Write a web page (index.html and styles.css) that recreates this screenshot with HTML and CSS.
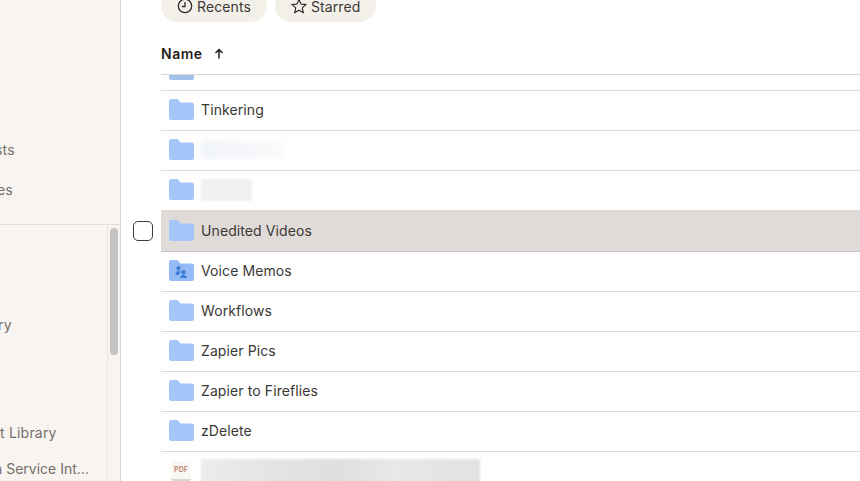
FILE: index.html
```html
<!DOCTYPE html>
<html lang="en">
<head>
  <meta charset="UTF-8" />
  <meta name="viewport" content="width=device-width, initial-scale=1.0"/>
  <title>All files</title>
  <link rel="stylesheet" href="styles.css">
</head>
<body>

  <svg class="defs" aria-hidden="true">
    <symbol id="folder" viewBox="0 0 25 21">
      <path d="M0 2a2 2 0 0 1 2-2h6.500l3 3.500H23a2 2 0 0 1 2 2V19a2 2 0 0 1-2 2H2a2 2 0 0 1-2-2z"/>
    </symbol>
  </svg>

  <aside class="sidebar">
    <div class="nav-top">
      <div class="nav-item nav-cut">s</div>
      <div class="nav-item top-a">sts</div>
      <div class="nav-item top-b">es</div>
    </div>
    <div class="nav-lower">
      <div class="nav-scroll">
        <div class="nav-item lib-a">ry</div>
        <div class="nav-item lib-b">t Library</div>
        <div class="nav-item lib-c">n Service Int...</div>
      </div>
      <div class="scrollbar"><div class="thumb"></div></div>
    </div>
  </aside>

  <main class="content">
    <div class="filters">
      <div class="pill">
        <svg class="pill-icon" viewBox="0 0 16 16"><circle cx="8" cy="8" r="6.700"/><path d="M8 4v4.500H5"/></svg>
        Recents
      </div>
      <div class="pill">
        <svg class="pill-icon" viewBox="0 0 18 17"><path d="M9 1.300l2.300 5 5.400.6-4 3.700 1.100 5.400L9 13.300 4.200 16l1.100-5.400-4-3.700 5.400-.6z"/></svg>
        Starred
      </div>
    </div>

    <div class="list-head">
      <span>Name</span>
      <svg class="sort-arrow" viewBox="0 0 10 11"><path d="M5 10.500V1.500M1.500 5L5 1.500 8.500 5"/></svg>
    </div>

    <div class="list">
      <div class="list-inner">
        <div class="row-wrap">
          <div class="gutter"></div>
          <div class="row">
            <svg class="folder shade"><use href="#folder"/></svg>
          </div>
        </div>
        <div class="row-wrap">
          <div class="gutter"></div>
          <div class="row">
            <svg class="folder"><use href="#folder"/></svg>
            <span class="name">Tinkering</span>
          </div>
        </div>
        <div class="row-wrap">
          <div class="gutter"></div>
          <div class="row">
            <svg class="folder"><use href="#folder"/></svg>
            <div class="smudge smudge-blue"></div>
          </div>
        </div>
        <div class="row-wrap">
          <div class="gutter"></div>
          <div class="row">
            <svg class="folder"><use href="#folder"/></svg>
            <div class="smudge smudge-grey"></div>
          </div>
        </div>
        <div class="row-wrap">
          <div class="gutter"><div class="checkbox"></div></div>
          <div class="row selected">
            <svg class="folder"><use href="#folder"/></svg>
            <span class="name">Unedited Videos</span>
          </div>
        </div>
        <div class="row-wrap">
          <div class="gutter"></div>
          <div class="row">
            <svg class="folder shared" viewBox="0 0 25 21">
              <use href="#folder"/>
              <path class="people" d="M9.500 6a2.200 2.200 0 1 1 0 4.400 2.200 2.200 0 0 1 0-4.400zM6.500 15c0-2.800 1.200-4 3.200-4 1 0 1.700.4 2.200 1.100-1.100.7-1.800 1.600-2 2.900zM14.500 10a2.300 2.300 0 1 1 0 4.600 2.300 2.300 0 0 1 0-4.600zM11 18c.2-2 1.500-3 3.500-3s3.300 1 3.500 3z"/>
            </svg>
            <span class="name">Voice Memos</span>
          </div>
        </div>
        <div class="row-wrap">
          <div class="gutter"></div>
          <div class="row">
            <svg class="folder"><use href="#folder"/></svg>
            <span class="name">Workflows</span>
          </div>
        </div>
        <div class="row-wrap">
          <div class="gutter"></div>
          <div class="row">
            <svg class="folder"><use href="#folder"/></svg>
            <span class="name">Zapier Pics</span>
          </div>
        </div>
        <div class="row-wrap">
          <div class="gutter"></div>
          <div class="row">
            <svg class="folder"><use href="#folder"/></svg>
            <span class="name">Zapier to Fireflies</span>
          </div>
        </div>
        <div class="row-wrap">
          <div class="gutter"></div>
          <div class="row">
            <svg class="folder"><use href="#folder"/></svg>
            <span class="name">zDelete</span>
          </div>
        </div>
        <div class="row-wrap">
          <div class="gutter"></div>
          <div class="row">
            <div class="pdf">PDF</div>
            <div class="smudge smudge-long"></div>
          </div>
        </div>
      </div>
    </div>
  </main>

</body>
</html>
```
FILE: styles.css
```css
html, body {
  height: 100%;
}

body {
  margin: 0;
  display: flex;
  overflow: hidden;
  font-family: Inter, 'Liberation Sans', sans-serif;
  color: #3a3835;
  background: white;
}

.defs {
  display: none;
}

/* sidebar */
.sidebar {
  width: 121px;
  flex: none;
  box-sizing: border-box;
  display: flex;
  flex-direction: column;
  overflow: hidden;
  background: #f7f4f1;
  border-right: 1px solid #d5d3d0;
}

.nav-top {
  height: 225px;
  flex: none;
  box-sizing: border-box;
  padding-top: 50px;
  border-bottom: 1px solid #e3e0dc;
}

.nav-item {
  height: 40px;
  line-height: 40px;
  font-size: 14px;
  letter-spacing: .2px;
  color: #736f6a;
  white-space: nowrap;
}

.nav-cut {
  margin-left: -7px;
  margin-bottom: 40px;
  color: #55524e;
}

.top-a {
  margin-left: -5px;
}

.top-b {
  margin-left: -3px;
}

.nav-lower {
  flex: 1;
  display: flex;
  min-width: 0;
  min-height: 0;
}

.nav-scroll {
  flex: 1;
  min-width: 0;
  padding-top: 80px;
}

.lib-a {
  margin-left: -2px;
}

.lib-b {
  margin-top: 68px;
}

.lib-c {
  margin-top: -4px;
  margin-left: -6px;
  letter-spacing: 0;
}

.scrollbar {
  width: 13px;
  flex: none;
  border-left: 1px solid #eae7e3;
  padding: 3px 2px 0;
  box-sizing: border-box;
}

.thumb {
  height: 127px;
  border-radius: 4px;
  background: #c4c3c1;
}

/* main column */
.content {
  flex: 1;
  min-width: 0;
  display: flex;
  flex-direction: column;
}

.filters {
  display: flex;
  gap: 8px;
  margin-top: -10px;
  padding-left: 40px;
}

.pill {
  height: 32px;
  padding: 0 16px;
  display: flex;
  align-items: center;
  gap: 4px;
  border-radius: 16px;
  background: #f3f0e9;
  font-size: 14px;
  letter-spacing: .1px;
  color: #3a3835;
}

.pill-icon {
  width: 16px;
  height: 16px;
  fill: none;
  stroke: #2b2a28;
  stroke-width: 1.300;
}

.list-head {
  height: 53px;
  box-sizing: border-box;
  margin-left: 40px;
  padding-top: 10px;
  display: flex;
  align-items: center;
  gap: 11px;
  border-bottom: 1px solid #d8d6d3;
  font-size: 14px;
  font-weight: 600;
  letter-spacing: .5px;
  color: #1f1e1c;
}

.sort-arrow {
  width: 10px;
  height: 11px;
  fill: none;
  stroke: #1f1e1c;
  stroke-width: 1.500;
}

.list {
  flex: 1;
  min-height: 0;
  overflow: hidden;
}

/* scrolled part way into the list */
.list-inner {
  margin-top: -24px;
}

.row-wrap {
  display: flex;
}

.gutter {
  width: 40px;
  flex: none;
  display: flex;
  align-items: center;
  padding: 0 0 2px 12px;
  box-sizing: border-box;
}

.checkbox {
  width: 20px;
  height: 20px;
  box-sizing: border-box;
  border: 1.500px solid #3c3b39;
  border-radius: 5px;
  background: white;
}

.row {
  flex: 1;
  height: 40px;
  box-sizing: border-box;
  padding: 0 0 2px 8px;
  display: flex;
  align-items: center;
  gap: 7px;
  border-bottom: 1px solid #dcdad7;
  font-size: 14px;
  letter-spacing: .1px;
}

.row.selected {
  height: 41px;
  background: #e0dbd8;
  border-bottom-color: #c9c6c2;
}

.folder {
  width: 25px;
  height: 21px;
  flex: none;
  fill: #a5c6f8;
}

.folder.shade {
  fill: #a3bfeb;
}

.folder.shared {
  fill: #94bbf3;
}

.people {
  fill: #3d7fd9;
}

.name {
  color: #3a3835;
}

.smudge {
  filter: blur(2px);
}

.smudge-blue {
  width: 84px;
  height: 18px;
  background: linear-gradient(to right, #f1f4fa, #f6f7fa 60%, #fbfbfc);
}

.smudge-grey {
  width: 51px;
  height: 22px;
  background: #f0f0f0;
  filter: blur(1px);
}

.smudge-long {
  width: 279px;
  height: 24px;
  background: linear-gradient(to right, #ececec, #e3e3e3 30%, #dfdfdf 50%, #e8e8e8 70%, #e2e2e2);
  filter: blur(1px);
}

.pdf {
  width: 20px;
  height: 20px;
  margin-left: 2px;
  margin-right: 3px;
  box-sizing: border-box;
  border-radius: 3px;
  background: #faf8f5;
  border-bottom: 2px solid #d9d6d1;
  font-size: 7px;
  font-weight: 700;
  line-height: 17px;
  text-align: center;
  color: #c08a70;
}
```
